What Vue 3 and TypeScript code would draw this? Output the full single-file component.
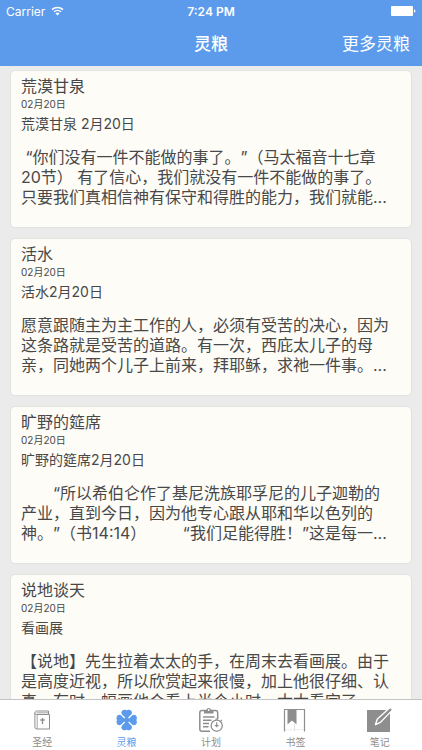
<script setup lang="ts">
import { ref } from 'vue'

interface Devotional {
  title: string
  date: string
  subtitle: string
  excerpt: string
}

interface Tab {
  id: string
  label: string
}

const devotionals: Devotional[] = [
  {
    title: '荒漠甘泉',
    date: '02月20日',
    subtitle: '荒漠甘泉 2月20日',
    excerpt:
      ' “你们没有一件不能做的事了。”（马太福音十七章\n20节） 有了信心，我们就没有一件不能做的事了。\n只要我们真相信神有保守和得胜的能力，我们就能...',
  },
  {
    title: '活水',
    date: '02月20日',
    subtitle: '活水2月20日',
    excerpt:
      '愿意跟随主为主工作的人，必须有受苦的决心，因为\n这条路就是受苦的道路。有一次，西庇太儿子的母\n亲，同她两个儿子上前来，拜耶稣，求祂一件事。...',
  },
  {
    title: '旷野的筵席',
    date: '02月20日',
    subtitle: '旷野的筵席2月20日',
    excerpt:
      '　　“所以希伯仑作了基尼洗族耶孚尼的儿子迦勒的\n产业，直到今日，因为他专心跟从耶和华以色列的\n神。”（书14∶14）　　 “我们足能得胜！”这是每一...',
  },
  {
    title: '说地谈天',
    date: '02月20日',
    subtitle: '看画展',
    excerpt:
      '【说地】先生拉着太太的手，在周末去看画展。由于\n是高度近视，所以欣赏起来很慢，加上他很仔细、认\n真，有时一幅画他会看上半个小时。太太看完了...',
  },
]

const tabs: Tab[] = [
  { id: 'bible', label: '圣经' },
  { id: 'manna', label: '灵粮' },
  { id: 'plan', label: '计划' },
  { id: 'bookmark', label: '书签' },
  { id: 'notes', label: '笔记' },
]

const activeTab = ref('manna')
</script>

<template>
  <div class="app">
    <header class="header">
      <div class="status">
        <div class="carrier">
          <span>Carrier</span>
          <svg class="wifi" viewBox="0 0 13 10" aria-hidden="true">
            <path d="M1 3.6a8 8 0 0 1 11 0M3 5.8a5.1 5.1 0 0 1 7 0" fill="none" stroke="#fff" stroke-width="1.5" />
            <path d="M6.5 9.4 4.5 7.4a3 3 0 0 1 4 0z" fill="#fff" />
          </svg>
        </div>
        <span class="time">7:24 PM</span>
        <svg class="battery" viewBox="0 0 25 10" aria-hidden="true">
          <rect x="0" y="0" width="22" height="10" rx="1" fill="#fff" />
          <path d="M23 3.4c2 .4 2 2.8 0 3.2z" fill="#fff" />
        </svg>
      </div>
      <div class="nav">
        <h1 class="nav-title">灵粮</h1>
        <button class="more" type="button">更多灵粮</button>
      </div>
    </header>

    <main class="feed">
      <article v-for="item in devotionals" :key="item.title" class="card">
        <h2 class="card-title">{{ item.title }}</h2>
        <time class="card-date">{{ item.date }}</time>
        <p class="card-subtitle">{{ item.subtitle }}</p>
        <p class="card-text">{{ item.excerpt }}</p>
      </article>
    </main>

    <nav class="tabs">
      <button
        v-for="tab in tabs"
        :key="tab.id"
        type="button"
        class="tab"
        :class="{ active: tab.id === activeTab }"
        @click="activeTab = tab.id"
      >
        <svg v-if="tab.id === 'bible'" class="icon" viewBox="0 0 26 26" fill="none" stroke="currentColor" aria-hidden="true">
          <path d="M20.5 7.500h-13C5.400 7.500 5.400 4 7.500 4h12v3.500M5.900 5.800v14.200q0 2 2 2h12.600V7.500" />
          <path d="M7.500 5.800h12M8.200 8v14" stroke-width=".8" />
          <path d="M13.500 11v6M11.300 13h4.400" stroke-width="1.300" />
        </svg>
        <svg v-else-if="tab.id === 'manna'" class="icon" viewBox="0 0 26 26" fill="currentColor" aria-hidden="true">
          <g transform="translate(12.700 13)">
            <path
              v-for="angle in [0, 90, 180, 270]"
              :key="angle"
              :transform="`rotate(${angle})`"
              d="M0 0Q-1.800-3.200-4.600-5.400C-6.400-7.400-4.600-10.600-1.600-10.200Q-.6-10.100 0-9.400Q.6-10.100 1.600-10.200C4.600-10.600 6.400-7.400 4.600-5.400Q1.800-3.200 0 0z"
            />
            <circle r="2.600" />
          </g>
        </svg>
        <svg v-else-if="tab.id === 'plan'" class="icon" viewBox="0 0 26 26" fill="none" stroke="currentColor" aria-hidden="true">
          <path d="M12 24.200H4Q1.800 24.200 1.800 22V5.800Q1.800 3.600 4 3.600h13.500q2.200 0 2.200 2.200V12" stroke-width="1.500" />
          <path d="M6 6.500V3.400h2.400C8.600.2 12.900.2 13.100 3.400h2.400v3.100z" fill="currentColor" stroke="none" />
          <circle cx="10.750" cy="3" r=".9" fill="#fff" stroke="none" />
          <path d="M5 10h11.500M5 13.300h8.500M5 16.500h6M5 19.700h5.500" stroke-width="1.500" />
          <circle cx="18.700" cy="18.700" r="5.600" stroke-width="1.300" />
          <path d="M18.700 15.200v5M16.800 18.700h3.800M17.500 12.200h2.400M22.700 14l1.200-1" stroke-width="1.200" />
        </svg>
        <svg v-else-if="tab.id === 'bookmark'" class="icon" viewBox="0 0 26 26" fill="none" stroke="currentColor" aria-hidden="true">
          <path d="M2.500 24.500V2.500h20v22" stroke-width="1.200" />
          <path d="M3 23q7-1 9.500.5Q15 22 22 23" stroke-width=".7" opacity=".25" />
          <path d="M12.500 17v6" stroke-width=".8" opacity=".35" />
          <path d="M5.500 2h9v15.500L10 13.500l-4.500 4z" fill="currentColor" stroke="none" />
        </svg>
        <svg v-else class="icon" viewBox="0 0 26 26" fill="none" stroke-linecap="round" stroke-linejoin="round" aria-hidden="true">
          <path d="M0 3h23v22H0z" fill="currentColor" />
          <path d="m8.500 17.700 1.700-5.400L22 1.400q2.600-.4 2.600 2.400L13.500 15.300z" fill="currentColor" stroke="#fff" stroke-width="1.400" />
          <path d="M23.500 2.500 12.500 13.500" stroke="currentColor" stroke-width="2" />
        </svg>
        <span>{{ tab.label }}</span>
      </button>
    </nav>
  </div>
</template>

<style>
body {
  margin: 0;
}
</style>

<style scoped>
.app {
  display: flex;
  flex-direction: column;
  height: 100vh;
  overflow: hidden;
  background: #ebebeb;
  color: #484848;
  font-family: Inter, 'Noto Sans CJK SC', sans-serif;
  text-spacing-trim: space-all;
}

h1,
h2,
p {
  margin: 0;
  font-weight: 400;
}

button {
  padding: 0;
  border: 0;
  background: none;
  color: inherit;
  font-family: inherit;
}

.header {
  flex: none;
  background: #5c9beb;
  color: #fff;
}

.status {
  display: grid;
  grid-template-columns: 1fr auto 1fr;
  align-items: center;
  height: 22px;
  padding: 0 6px;
  font-size: 12px;
}

.carrier {
  display: flex;
  align-items: center;
  gap: 6px;
}

.wifi {
  width: 13px;
  height: 10px;
}

.time {
  font-weight: 600;
}

.battery {
  justify-self: end;
  width: 25px;
  height: 10px;
}

.nav {
  display: grid;
  grid-template-columns: 1fr auto 1fr;
  align-items: center;
  height: 40px;
  padding: 0 12px 4px;
}

.nav-title {
  grid-column: 2;
  font-size: 17px;
  font-weight: 500;
}

.more {
  justify-self: end;
  font-size: 17px;
}

.feed {
  display: flex;
  flex: 1;
  flex-direction: column;
  gap: 10px;
  min-height: 0;
  padding: 4px 10px 0;
  overflow: hidden;
}

.card {
  flex: none;
  padding: 4px 0 20px 10px;
  border: 1px solid #e2e2e0;
  border-radius: 5px;
  background: #fdfcf7;
}

.card-title {
  font-size: 16px;
  line-height: 22px;
}

.card-date {
  display: block;
  font-size: 10px;
  line-height: 14px;
}

.card-subtitle {
  margin-bottom: 10px;
  font-size: 14px;
  line-height: 26px;
}

.card-text {
  font-size: 16px;
  line-height: 20px;
  white-space: pre;
}

.tabs {
  display: flex;
  flex: none;
  border-top: 1px solid #c4c4c4;
  background: #fff;
}

.tab {
  display: flex;
  flex: 1;
  flex-direction: column;
  align-items: center;
  gap: 2px;
  height: 50px;
  padding-top: 7px;
  color: #8e8e8e;
  font-size: 10px;
  line-height: 14px;
}

.tab.active {
  color: #5c9beb;
}

.icon {
  width: 26px;
  height: 26px;
}
</style>
